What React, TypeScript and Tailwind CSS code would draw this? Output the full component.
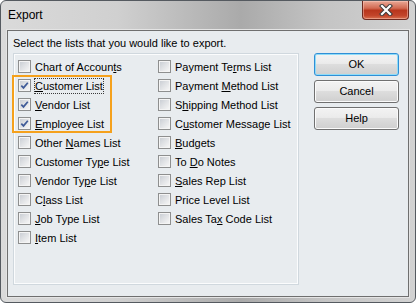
import React from "react";

type Item = { label: string; checked?: boolean; focused?: boolean };

const leftItems: Item[] = [
  { label: "Chart of Accoun&ts" },
  { label: "&Customer List", checked: true, focused: true },
  { label: "&Vendor List", checked: true },
  { label: "&Employee List", checked: true },
  { label: "Other &Names List" },
  { label: "Customer Ty&pe List" },
  { label: "Vendor Ty&pe List" },
  { label: "C&lass List" },
  { label: "&Job Type List" },
  { label: "&Item List" },
];

const rightItems: Item[] = [
  { label: "Payment Te&rms List" },
  { label: "Payment &Method List" },
  { label: "S&hipping Method List" },
  { label: "C&ustomer Message List" },
  { label: "&Budgets" },
  { label: "To &Do Notes" },
  { label: "&Sales Rep List" },
  { label: "Price Level List" },
  { label: "Sales Ta&x Code List" },
];

// "&" marks the access key letter, like a Win32 resource string
const AccessLabel = ({ text }: { text: string }) => {
  const i = text.indexOf("&");
  if (i < 0) return <>{text}</>;
  return (
    <>
      {text.slice(0, i)}
      <u className="underline-offset-[1px]">{text[i + 1]}</u>
      {text.slice(i + 2)}
    </>
  );
};

const CheckBox = ({ checked }: { checked?: boolean }) => (
  <span className="flex h-[13px] w-[13px] shrink-0 items-center justify-center border border-[#8e8f8f] bg-[#f4f4f4]">
    <span className="relative h-[11px] w-[11px] border border-[#f4f4f4] bg-[linear-gradient(135deg,#cbcfd5_0%,#dfe1e4_45%,#f5f5f5_100%)]">
      {checked && (
        <svg viewBox="0 0 9 9" className="absolute left-0 top-0 h-[9px] w-[9px]">
          <path d="M1.3 4.6 L3.5 6.9 L7.8 1.8" fill="none" stroke="#3f5b98" strokeWidth="1.7" />
        </svg>
      )}
    </span>
  </span>
);

const Row = ({ item }: { item: Item }) => (
  <div className="flex h-[19px] items-center">
    <CheckBox checked={item.checked} />
    <span
      className={
        "ml-[3px] whitespace-nowrap border leading-[14px] " +
        (item.focused ? "border-dotted border-[#3a3a3a]" : "border-transparent")
      }
    >
      <AccessLabel text={item.label} />
    </span>
  </div>
);

const WinButton = ({ label, isDefault }: { label: string; isDefault?: boolean }) => (
  <button
    className={
      "h-[23px] w-[85px] rounded-[3px] border text-[11px] text-black bg-[linear-gradient(180deg,#f3f3f3_0%,#ebebeb_45%,#dddddd_50%,#cfcfcf_100%)] " +
      (isDefault
        ? "border-[#2f8fd6] shadow-[inset_0_0_0_1px_#8fdcf8]"
        : "border-[#707070] shadow-[inset_0_0_0_1px_#fbfbfb]")
    }
  >
    {label}
  </button>
);

export default function App() {
  return (
    <div className="h-[303px] w-[416px] bg-white font-['Liberation_Sans',Arial,sans-serif]">
      <div className="flex h-full w-full flex-col rounded-[6px] border border-[#555a60] bg-[linear-gradient(90deg,#dadada_0%,#d0d0d0_28%,#aaaaaa_58%,#c4c4c4_78%,#d2d2d2_100%)]">
        {/* title bar */}
        <div className="flex h-[29px] shrink-0 items-start justify-between">
          <span className="ml-[7px] mt-[7px] text-[12px] leading-[15px] text-black">Export</span>
          <div className="mr-[6px] flex h-[19px] w-[47px] items-center justify-center rounded-b-[4px] border border-t-0 border-[#6e2a20] bg-[linear-gradient(180deg,#e9a896_0%,#d26a52_40%,#b8361d_52%,#c2442a_80%,#d8714f_100%)] shadow-[inset_0_0_0_1px_rgba(255,210,200,0.45)]">
            <svg viewBox="0 0 14 12" className="h-[12px] w-[14px]">
              <path d="M3 2 L11 10 M11 2 L3 10" stroke="#3c3c3c" strokeWidth="4.2" strokeLinecap="square" />
              <path d="M3 2 L11 10 M11 2 L3 10" stroke="#ffffff" strokeWidth="2.2" strokeLinecap="square" />
            </svg>
          </div>
        </div>

        {/* client area */}
        <div className="mx-[6px] mb-[5px] flex-1 border border-[#6f6f6f] bg-[#e8ecef] pl-[5px] pt-[5px] text-[11px] text-black shadow-[0_0_0_1px_#e4e4e4]">
          <p className="leading-[14px]">Select the lists that you would like to export.</p>
          <div className="mt-[3px] flex items-start">
            <div className="relative h-[232px] w-[286px] border border-[#d0d8de] pl-[4px] pt-[3px] shadow-[inset_0_0_0_1px_#fbfcfd]">
              <div className="grid grid-cols-[140px_1fr]">
                <div className="flex flex-col">
                  {leftItems.map((it) => (
                    <Row key={it.label} item={it} />
                  ))}
                </div>
                <div className="flex flex-col">
                  {rightItems.map((it) => (
                    <Row key={it.label} item={it} />
                  ))}
                </div>
              </div>
              {/* highlight annotation over the three checked lists */}
              <div className="pointer-events-none absolute left-[-2px] top-[21px] h-[58px] w-[100px] border-2 border-[#f5a11c]" />
            </div>
            <div className="ml-[15px] flex flex-col gap-[4px]">
              <WinButton label="OK" isDefault />
              <WinButton label="Cancel" />
              <WinButton label="Help" />
            </div>
          </div>
        </div>
      </div>
    </div>
  );
}
